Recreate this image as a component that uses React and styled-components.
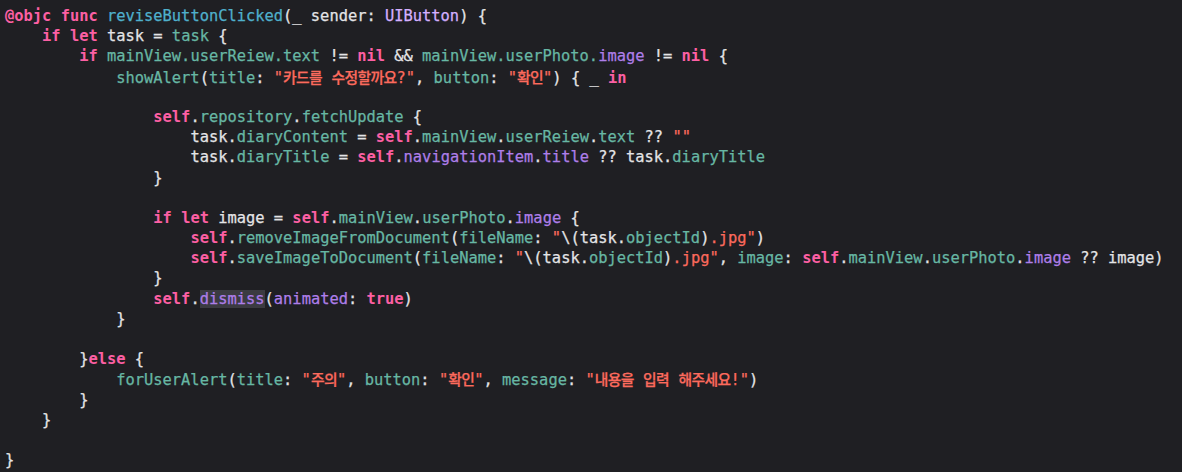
import React from "react";
import styled, { createGlobalStyle } from "styled-components";

const GlobalStyle = createGlobalStyle`
  html, body {
    margin: 0;
    padding: 0;
    background: #1f1f23;
  }
`;

const colors = {
  p: "#e4e4e6",
  kw: "#fc5fa3",
  str: "#fc6a5d",
  teal: "#67b7a4",
  decl: "#4fb0cc",
  purple: "#ae7ee9",
  type: "#d5b0ff",
};

const Editor = styled.pre`
  margin: 0;
  width: 1182px;
  height: 472px;
  box-sizing: border-box;
  padding: 6px 0 0 5px;
  background: #1f1f23;
  font-family: "DejaVu Sans Mono", "Liberation Mono", monospace;
  font-size: 15.4px;
  line-height: 20.2px;
  color: ${colors.p};
  overflow: hidden;
`;

const Line = styled.div`
  height: 20.2px;
  white-space: pre;
  padding-left: ${(p) => p.$indent * 9.27}px;
`;

const Token = styled.span`
  color: ${(p) => colors[p.$kind]};
  font-weight: ${(p) => (p.$kind === "kw" ? 700 : 400)};
  -webkit-text-stroke: ${(p) => (p.$kind === "kw" ? "0" : "0.25px")};
  background: ${(p) => (p.$hl ? "#3b3b41" : "transparent")};
`;

const Hangul = styled.span`
  font-family: "Noto Sans CJK KR", sans-serif;
  font-size: 14.8px;
  letter-spacing: -0.6px;
  font-weight: 500;
`;

// split Hangul runs out so their width can be tuned apart from the mono font
const renderText = (text) =>
  text.split(/([\uac00-\ud7a3]+)/).map((part, i) =>
    /[\uac00-\ud7a3]/.test(part) ? <Hangul key={i}>{part}</Hangul> : part
  );

const code = [
  [0, [["kw", "@objc"], ["p", " "], ["kw", "func"], ["p", " "], ["decl", "reviseButtonClicked"], ["p", "(_ sender: "], ["type", "UIButton"], ["p", ") {"]]],
  [4, [["kw", "if"], ["p", " "], ["kw", "let"], ["p", " task = "], ["teal", "task"], ["p", " {"]]],
  [8, [["kw", "if"], ["p", " "], ["teal", "mainView.userReiew.text"], ["p", " != "], ["kw", "nil"], ["p", " && "], ["teal", "mainView.userPhoto."], ["purple", "image"], ["p", " != "], ["kw", "nil"], ["p", " {"]]],
  [12, [["teal", "showAlert"], ["p", "("], ["teal", "title"], ["p", ": "], ["str", "\"카드를 수정할까요?\""], ["p", ", "], ["teal", "button"], ["p", ": "], ["str", "\"확인\""], ["p", ") { _ "], ["kw", "in"]]],
  [0, []],
  [16, [["kw", "self"], ["p", "."], ["teal", "repository"], ["p", "."], ["teal", "fetchUpdate"], ["p", " {"]]],
  [20, [["p", "task."], ["teal", "diaryContent"], ["p", " = "], ["kw", "self"], ["p", "."], ["teal", "mainView"], ["p", "."], ["teal", "userReiew"], ["p", "."], ["teal", "text"], ["p", " ?? "], ["str", "\"\""]]],
  [20, [["p", "task."], ["teal", "diaryTitle"], ["p", " = "], ["kw", "self"], ["p", "."], ["purple", "navigationItem"], ["p", "."], ["purple", "title"], ["p", " ?? task."], ["teal", "diaryTitle"]]],
  [16, [["p", "}"]]],
  [0, []],
  [16, [["kw", "if"], ["p", " "], ["kw", "let"], ["p", " image = "], ["kw", "self"], ["p", "."], ["teal", "mainView"], ["p", "."], ["teal", "userPhoto"], ["p", "."], ["purple", "image"], ["p", " {"]]],
  [20, [["kw", "self"], ["p", "."], ["teal", "removeImageFromDocument"], ["p", "("], ["teal", "fileName"], ["p", ": "], ["str", "\""], ["p", "\\(task."], ["teal", "objectId"], ["p", ")"], ["str", ".jpg\""], ["p", ")"]]],
  [20, [["kw", "self"], ["p", "."], ["teal", "saveImageToDocument"], ["p", "("], ["teal", "fileName"], ["p", ": "], ["str", "\""], ["p", "\\(task."], ["teal", "objectId"], ["p", ")"], ["str", ".jpg\""], ["p", ", "], ["teal", "image"], ["p", ": "], ["kw", "self"], ["p", "."], ["teal", "mainView"], ["p", "."], ["teal", "userPhoto"], ["p", "."], ["purple", "image"], ["p", " ?? image)"]]],
  [16, [["p", "}"]]],
  [16, [["kw", "self"], ["p", "."], ["purple", "dismiss", true], ["p", "("], ["purple", "animated"], ["p", ": "], ["kw", "true"], ["p", ")"]]],
  [12, [["p", "}"]]],
  [0, []],
  [8, [["p", "}"], ["kw", "else"], ["p", " {"]]],
  [12, [["teal", "forUserAlert"], ["p", "("], ["teal", "title"], ["p", ": "], ["str", "\"주의\""], ["p", ", "], ["teal", "button"], ["p", ": "], ["str", "\"확인\""], ["p", ", "], ["teal", "message"], ["p", ": "], ["str", "\"내용을 입력 해주세요!\""], ["p", ")"]]],
  [8, [["p", "}"]]],
  [4, [["p", "}"]]],
  [0, []],
  [0, [["p", "}"]]],
];

const App = () => {
  return (
    <>
      <GlobalStyle />
      <Editor>
        {code.map(([indent, tokens], i) => (
          <Line key={i} $indent={indent}>
            {tokens.map(([kind, text, hl], j) => (
              <Token key={j} $kind={kind} $hl={hl}>
                {renderText(text)}
              </Token>
            ))}
          </Line>
        ))}
      </Editor>
    </>
  );
};

export default App;
